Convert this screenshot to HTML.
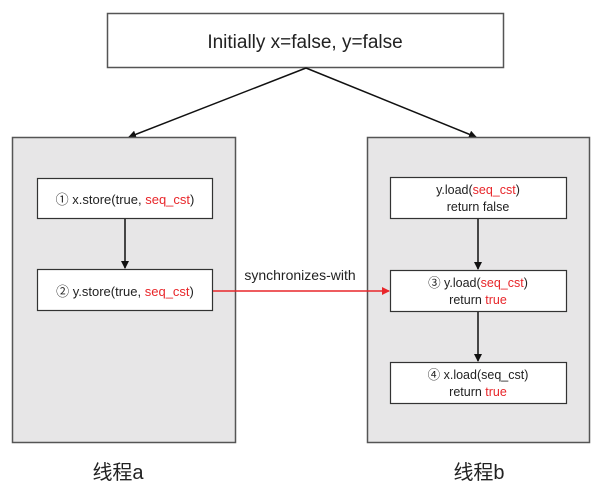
<!DOCTYPE html>
<html><head><meta charset="utf-8"><style>
body{margin:0;width:602px;height:496px;background:#fff;overflow:hidden}
svg{display:block}
text{font-family:"Liberation Sans","Noto Sans CJK SC",sans-serif;fill:#222}
.r{fill:#e8262a}
</style></head><body>
<svg width="602" height="496" viewBox="0 0 602 496">
<defs>
<marker id="a" markerWidth="8" markerHeight="8" refX="7" refY="4" orient="auto" markerUnits="userSpaceOnUse"><path d="M0,0 L8,4 L0,8 z" fill="#111"/></marker>
<marker id="ar" markerWidth="8" markerHeight="8" refX="7" refY="4" orient="auto" markerUnits="userSpaceOnUse"><path d="M0,0 L8,4 L0,8 z" fill="#e8262a"/></marker>
</defs>
<rect x="107.5" y="13.5" width="396" height="54" fill="#fff" stroke="#555" stroke-width="1.5"/>
<text x="305" y="48" font-size="19" text-anchor="middle">Initially x=false, y=false</text>
<line x1="306" y1="68" x2="129" y2="137" stroke="#111" stroke-width="1.5" marker-end="url(#a)"/>
<line x1="306" y1="68" x2="476" y2="137" stroke="#111" stroke-width="1.5" marker-end="url(#a)"/>
<rect x="12.5" y="137.5" width="223" height="305" fill="#e7e6e7" stroke="#555" stroke-width="1.5"/>
<rect x="367.5" y="137.5" width="222" height="305" fill="#e7e6e7" stroke="#555" stroke-width="1.5"/>
<rect x="37.5" y="178.5" width="175" height="40" fill="#fff" stroke="#333" stroke-width="1.2"/>
<text x="125" y="204" font-size="13" text-anchor="middle">① x.store(true, <tspan class="r">seq_cst</tspan>)</text>
<line x1="125" y1="219" x2="125" y2="268" stroke="#111" stroke-width="1.5" marker-end="url(#a)"/>
<rect x="37.5" y="269.5" width="175" height="41" fill="#fff" stroke="#333" stroke-width="1.2"/>
<text x="125" y="296" font-size="13" text-anchor="middle">② y.store(true, <tspan class="r">seq_cst</tspan>)</text>
<line x1="213" y1="291" x2="389" y2="291" stroke="#e8262a" stroke-width="1.5" marker-end="url(#ar)"/>
<text x="300" y="280" font-size="14" text-anchor="middle">synchronizes-with</text>
<rect x="390.5" y="177.5" width="176" height="41" fill="#fff" stroke="#333" stroke-width="1.2"/>
<text x="478" y="194" font-size="12.5" text-anchor="middle">y.load(<tspan class="r">seq_cst</tspan>)</text>
<text x="478" y="211" font-size="12.5" text-anchor="middle">return false</text>
<line x1="478" y1="219" x2="478" y2="269" stroke="#111" stroke-width="1.5" marker-end="url(#a)"/>
<rect x="390.5" y="270.5" width="176" height="41" fill="#fff" stroke="#333" stroke-width="1.2"/>
<text x="478" y="287" font-size="12.5" text-anchor="middle">③ y.load(<tspan class="r">seq_cst</tspan>)</text>
<text x="478" y="304" font-size="12.5" text-anchor="middle">return <tspan class="r">true</tspan></text>
<line x1="478" y1="312" x2="478" y2="361" stroke="#111" stroke-width="1.5" marker-end="url(#a)"/>
<rect x="390.5" y="362.5" width="176" height="41" fill="#fff" stroke="#333" stroke-width="1.2"/>
<text x="478" y="379" font-size="12.5" text-anchor="middle">④ x.load(seq_cst)</text>
<text x="478" y="396" font-size="12.5" text-anchor="middle">return <tspan class="r">true</tspan></text>
<text x="118" y="479" font-size="20" text-anchor="middle">线程a</text>
<text x="479" y="479" font-size="20" text-anchor="middle">线程b</text>
</svg>
</body></html>
